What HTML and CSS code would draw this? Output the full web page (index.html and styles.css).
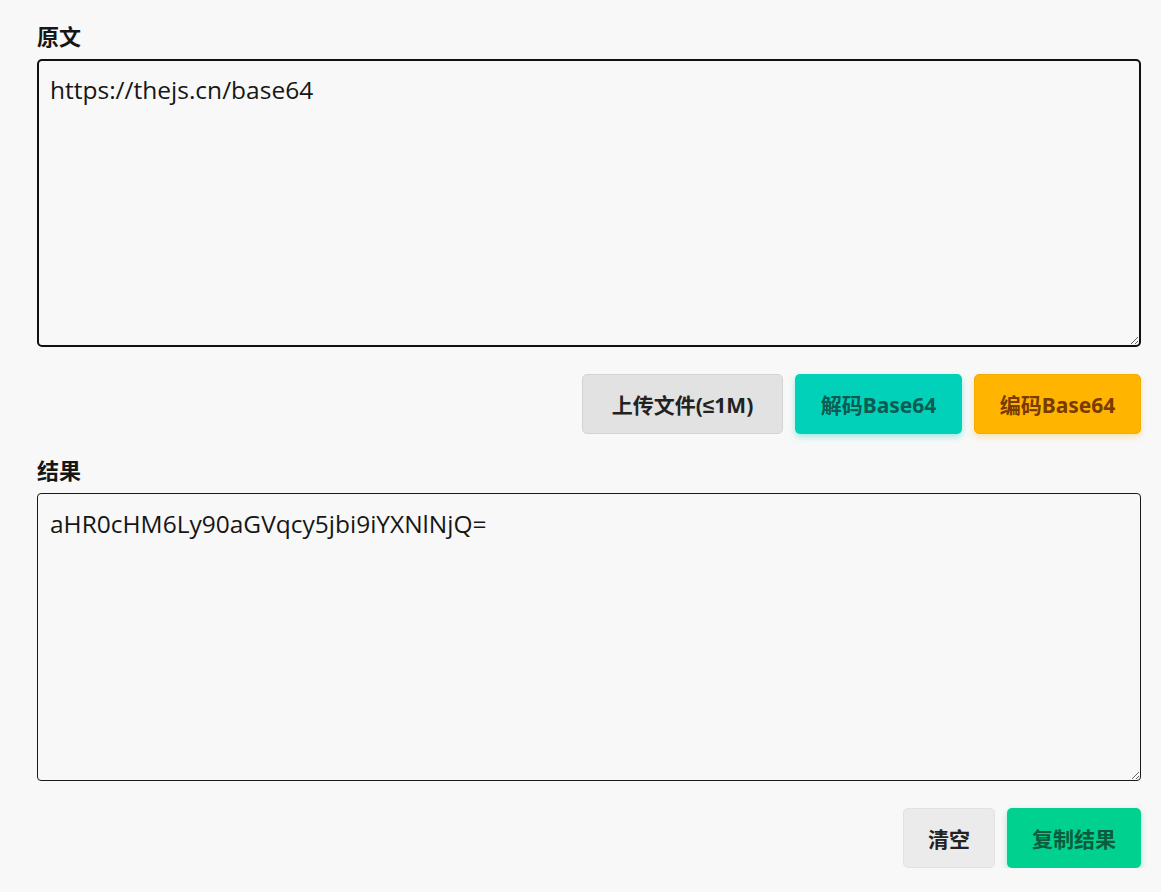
FILE: index.html
```html
<!DOCTYPE html>
<html lang="zh-CN">
<head>
    <meta charset="UTF-8">
    <meta name="viewport" content="width=device-width, initial-scale=1.0">
    <title>Base64 编码/解码</title>
    <link rel="stylesheet" href="styles.css">
</head>
<body>
    <div class="tool">
        <label class="field-label" for="source">原文</label>
        <textarea id="source" class="box box-active">https://thejs.cn/base64</textarea>
        <div class="actions">
            <button class="btn btn-upload">上传文件(≤1M)</button>
            <button class="btn btn-decode">解码Base64</button>
            <button class="btn btn-encode">编码Base64</button>
        </div>

        <label class="field-label field-label-result" for="result">结果</label>
        <textarea id="result" class="box">aHR0cHM6Ly90aGVqcy5jbi9iYXNlNjQ=</textarea>
        <div class="actions">
            <button class="btn btn-clear">清空</button>
            <button class="btn btn-copy">复制结果</button>
        </div>
    </div>

    <script>
        const source = document.getElementById("source");
        source.focus();
        source.setSelectionRange(source.value.length, source.value.length);
    </script>
</body>
</html>
```

FILE: styles.css
```css
body {
    margin: 0;
    padding: 0;
    background: #f8f8f8;
    color: #161616;
    font-family: "Open Sans", "Noto Sans", "Noto Sans CJK SC", sans-serif;
}
.tool {
    padding: 20px 20px 0 37px;
    display: flex;
    flex-direction: column;
}
.field-label {
    display: block;
    font-family: "Noto Sans CJK SC", sans-serif;
    font-size: 22px;
    font-weight: 700;
    line-height: 30px;
    margin-bottom: 9px;
    color: #161616;
}
.field-label-result {
    margin-top: 20px;
}
.box {
    box-sizing: border-box;
    width: 1104px;
    height: 288px;
    margin: 0;
    padding: 12px 12px;
    font-family: "Open Sans", "Noto Sans", sans-serif;
    font-size: 24.5px;
    line-height: 36px;
    color: #161616;
    caret-color: #111;
    background: #f8f8f8;
    border: 1px solid #1a1a1a;
    border-radius: 4px;
    resize: vertical;
    outline: none;
}
.box-active {
    border: 2px solid #111;
    border-radius: 5px;
    padding: 11px 11px;
}
.actions {
    display: flex;
    justify-content: flex-end;
    gap: 12px;
    width: 1104px;
    margin-top: 27px;
}
.btn {
    box-sizing: border-box;
    height: 60px;
    padding: 0;
    font-family: "Noto Sans", "Liberation Sans", "Noto Sans CJK SC", sans-serif;
    font-size: 21px;
    font-weight: 700;
    border: 1px solid transparent;
    border-radius: 5px;
    cursor: pointer;
}
.btn-upload {
    width: 201px;
    background: #e2e2e2;
    border-color: #d4d4d4;
    color: #222;
}
.btn-decode {
    width: 167px;
    background: #00d1b8;
    color: #0d5b52;
    box-shadow: 0 3px 6px rgba(0, 209, 184, 0.35);
}
.btn-encode {
    width: 167px;
    background: #ffb400;
    border-color: #f2ab00;
    color: #7a3b00;
    box-shadow: 0 3px 6px rgba(255, 180, 0, 0.3);
}
.btn-clear {
    width: 92px;
    background: #ebebeb;
    border-color: #e2e2e2;
    color: #222;
}
.btn-copy {
    width: 134px;
    background: #00d18f;
    color: #0c5b3c;
    box-shadow: 0 3px 6px rgba(0, 209, 143, 0.35);
}
```
